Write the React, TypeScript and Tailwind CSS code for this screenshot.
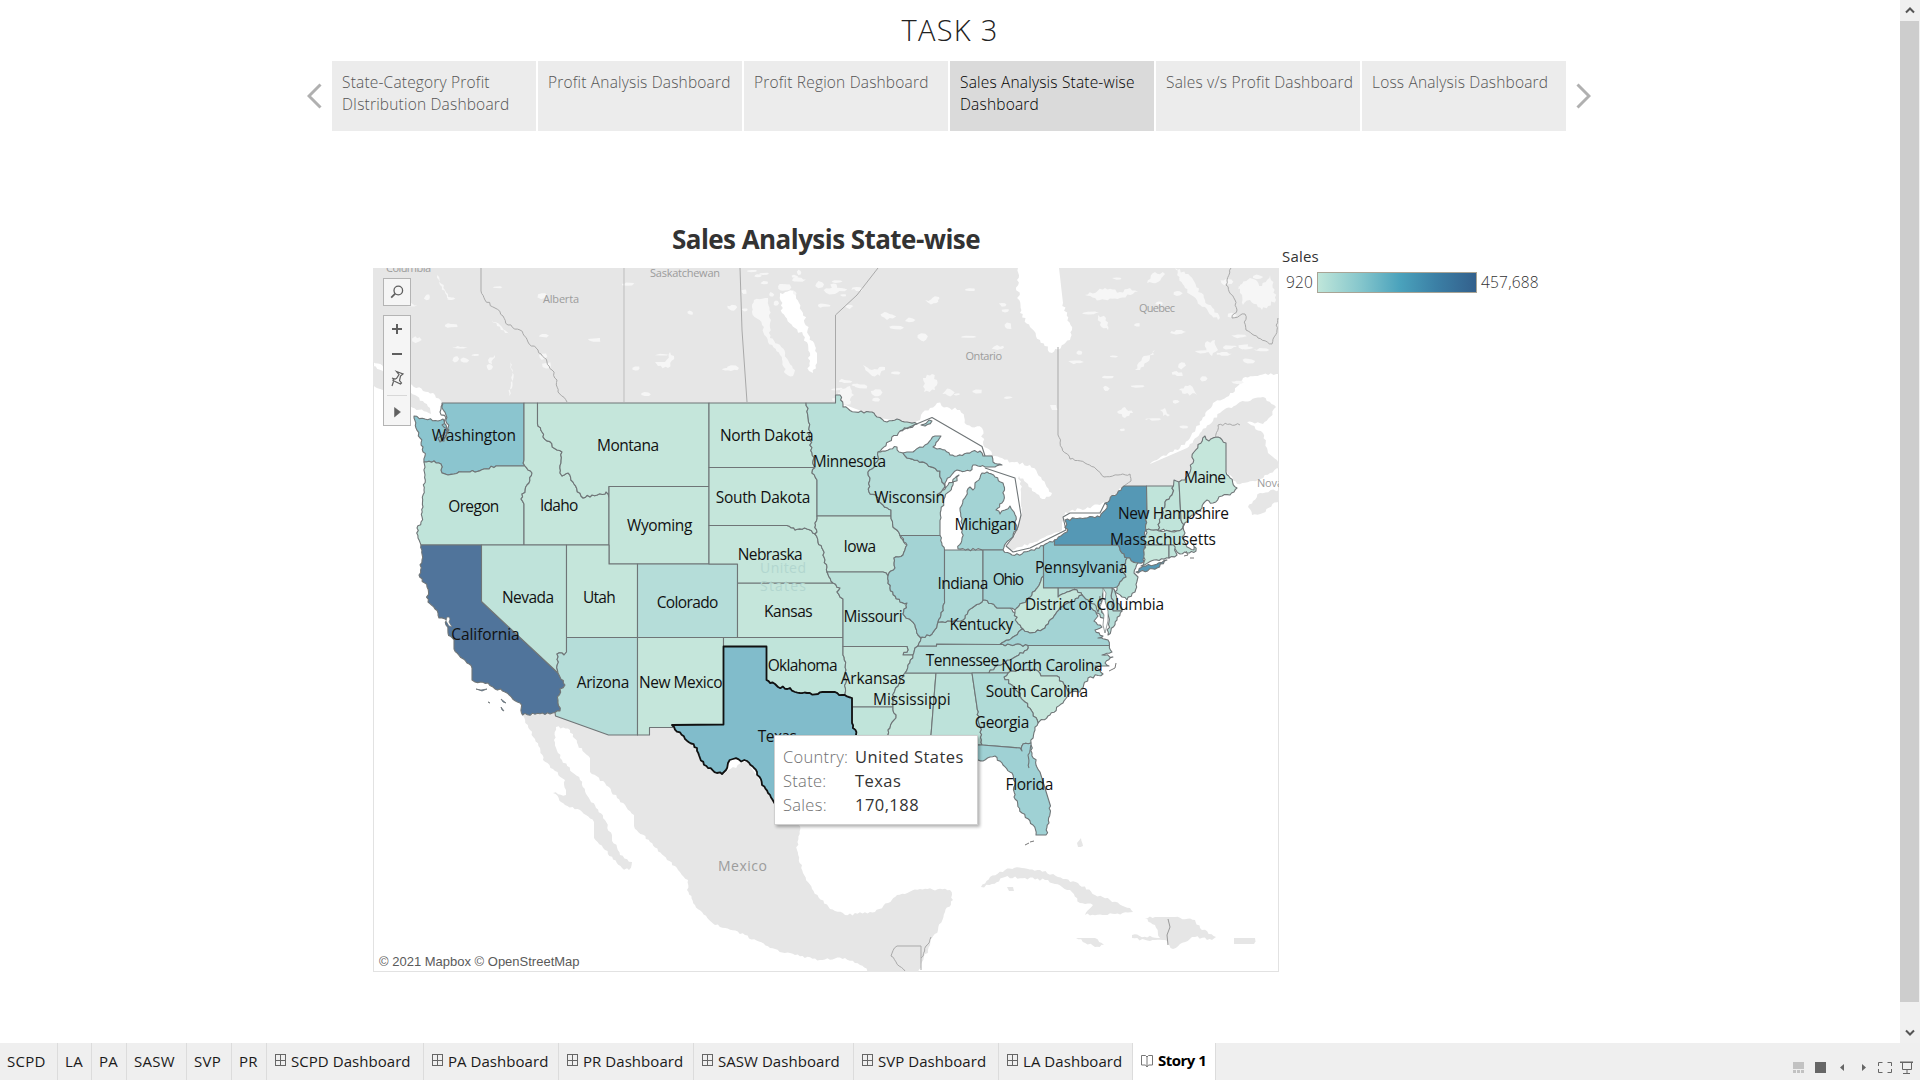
import React from "react";

const UI = "font-['Open_Sans','Noto_Sans',sans-serif]";

type Region = { fill: string; pts: string };

const L = "#c0e4da";
const L2 = "#c5e6db";
const M1 = "#b7ded9";
const M2 = "#a3d3d4";

const states: Region[] = [
  { fill: "#8bc5cf", pts: "442,403 524,403 524,460 525,466 496,466 484,469 470,472 462,472 454,474 448,475 442,473 441,464 434,461 424,462 425,456 423,447 420,438 416,428 414,418 414,416 425,419 438,421 443,419 446,425 447,432 441,441 444,441 448,428 446,415 442,408" },
  { fill: L, pts: "424,462 434,461 441,464 442,473 448,475 454,474 462,472 470,472 484,469 496,466 525,466 532,473 527,485 521,499 524,504 524,545 421,545 418,538 417,528 421,522 423,507 424,490 425,475" },
  { fill: L2, pts: "524,403 537.5,403 537.5,424 542,432 543,437 557,450 562,452 561,463 560,473 562,476 568,473 574,484 581,496 583,498 592,495 605,494 606,492 609,497 609,545 524,545 524,504 521,499 527,485 532,473 525,466 524,460" },
  { fill: L2, pts: "537.5,403 709,403 709,486.5 609,486.5 609,497 606,492 605,494 592,495 583,498 581,496 574,484 568,473 562,476 560,473 561,463 562,452 557,450 543,437 542,432 537.5,424" },
  { fill: L2, pts: "609,486.5 709,486.5 709,564 609,564" },
  { fill: "#50749b", pts: "421,545 481.5,545 481.5,601.5 558,673 560,677 565,685 560,689 558,700 560,711 555,712.5 522.5,715 520,703 505,692 493,687 488,683 475,682 472,680 472,668 467,663 454,649 454,640 448,633 446,625 447,620 439,618 438,613 428,602 427,587 419,575 422,560" },
  { fill: "#bfe3da", pts: "481.5,545 566.5,545 566.5,652 564,655 562,653 557,654 558,673 481.5,601.5" },
  { fill: L2, pts: "566.5,545 609,545 609,564 637.5,564 637.5,637.5 566.5,637.5" },
  { fill: "#b5ddd9", pts: "637.5,564 737.5,564 737.5,637.5 637.5,637.5" },
  { fill: "#b5ddd9", pts: "566.5,637.5 637.5,637.5 637.5,735 608.5,735 555.5,716 555,712.5 560,711 558,700 560,689 565,685 560,677 558,673 557,654 562,653 564,655 566.5,652" },
  { fill: L2, pts: "637.5,637.5 723.5,637.5 723.5,724.5 672,724.5 673,727.5 649.5,727.5 649.5,735 637.5,735" },
  { fill: L, pts: "723.5,637.5 843,637.5 843,655 846,670 845,696 842,695 835,692 827,692 818,694 807,693 795,692 790,688 778,687 770,683 766.5,680 766.5,646.5 723.5,646.5" },
  { fill: L2, pts: "737.5,583 833,583 840,588 837,592 840,597 843,599 843,637.5 737.5,637.5" },
  { fill: L2, pts: "709,525.5 787,525.5 795,530 807,529 815,534 818,542 823,550 825,560 827,572 833,583 737.5,583 737.5,564 709,564" },
  { fill: L2, pts: "709,467.5 815,467.5 812,473 817,480 817,516 815,523 817,532 815,534 807,529 795,530 787,525.5 709,525.5" },
  { fill: L2, pts: "709,403 806,403 808,417 810,437 812,453 815,467.5 709,467.5" },
  { fill: "#b8e0d9", pts: "806,403 835.5,403 835.5,395 840,395 843,407 855,412 861,411 864,413 872,412 877,417 887,422 897,419 907,422 917,424 900,431 878,452 877,462 868,472 870,478 869,492 877,497 883,505 891,510 891,516 817,516 817,480 812,473 815,467.5 812,453 810,437 808,417" },
  { fill: L2, pts: "817,516 891,516 893,527 900,535 907,545 903,555 894,558 895,568 888,576 883,572 827,572 825,560 823,550 818,542 815,534 817,532 815,523" },
  { fill: "#bbe1d9", pts: "827,572 883,572 888,576 890,588 900,602 907,603 903,614 915,625 918,635 921,638 918,646 915,648 913,655 903,655 908,650 907,646.5 843,646.5 843,599 840,597 837,592 840,588 833,583" },
  { fill: L2, pts: "843,646.5 907,646.5 908,650 903,655 913,655 908,665 905,673 900,682 895,690 893,700 893,707 852,707 852,698 845,696 846,670 843,655" },
  { fill: L, pts: "852,707 893,707 896,718 890,728 888,735 888,740 912,740 918,765 860,760 856,735 852,723" },
  { fill: L2, pts: "905,673 936,673 931,735 932,755 916,755 912,740 888,740 888,735 890,728 896,718 893,707 893,700 895,690 900,682" },
  { fill: "#bde2da", pts: "936,673 972,673 977,707 980,727 982,745 945,745 945,755 932,755 931,735" },
  { fill: "#b5ddd8", pts: "918,646 936.5,646 936.5,644 1000,644.5 1028,645.5 1027,650 1010,660 995,667 989,673 905,673 908,665 913,655 915,648" },
  { fill: "#b3dcd7", pts: "921,638 922,637 932,634 937,625 938,622 950,621 963,620 972,608 982,602 983,600 985,600 997,608 1010,608 1015,613 1017,622 1023,629 1013,637 1000,644.5 936.5,644 936.5,646 918,646" },
  { fill: M2, pts: "900,535.5 940,535.5 944.5,550 944.5,600 943,608 938,622 937,625 932,634 922,637 921,638 918,635 915,625 903,614 907,603 900,602 890,588 888,576 895,568 894,558 903,555 907,545 900,535.5" },
  { fill: "#add9d7", pts: "944.5,550 983,550 983,600 982,602 972,608 963,620 950,621 938,622 943,608 944.5,600" },
  { fill: M1, pts: "878,452 890,449 897,447 899,452 903,453 907,458 927,464 940,471 942,482 945,487 938,494 948,485 959,475 953,485 945,497 941,510 940,523 940,535.5 900,535.5 893,527 891,516 891,510 883,505 877,497 869,492 870,478 868,472 877,462" },
  { fill: M2, pts: "903,453 907,452 913,452 925,445 935,436 941,436 933,447 937,449 945,450 950,455 957,456 967,453 980,451 983,456 992,456 993,462 1002,465 995,467 985,467 978,466 973,465 970,471 957,470 950,477 945,483 945,487 942,482 940,471 927,464 907,458" },
  { fill: M2, pts: "980,478 975,483 973,490 970,487 963,500 960,508 963,527 962,538 958,549 983,550 1003,550 1006,543 1013,537 1017,527 1014,512 1010,506 1005,510 1000,514 996,510 1002,503 1004,495 1003,483 995,477 987,472 982,473" },
  { fill: M2, pts: "921,425 929,420 932,421 925,426" },
  { fill: M2, pts: "983,550 1003,550 1012,555 1022,554 1043.5,545.5 1043.5,573 1040,583 1032,595 1023,603 1015,610 1010,608 997,608 985,600 983,600" },
  { fill: "#91c9d0", pts: "1043.5,545.5 1054.5,540 1054.5,545 1118.5,545 1122,553 1127,558 1122,568 1126,577 1117,587 1113,588 1043.5,588" },
  { fill: "#5598b5", pts: "1054.5,540 1067,532 1065,520 1080,518 1100,517 1107,508 1105,503 1124,486 1146.5,486 1147,510 1146,530 1144,562 1138,563 1127,558 1122,553 1118.5,545 1054.5,545" },
  { fill: "#5598b5", pts: "1136,572 1143,566 1154,565 1167,560 1157,568 1138,573" },
  { fill: L, pts: "1146.5,486 1173.5,486 1172,495 1165,502 1158,530 1146,530 1147,510" },
  { fill: L, pts: "1173.5,486 1174,480 1179,482 1181,520 1183,527 1177,531 1158,530 1165,502 1172,495" },
  { fill: L2, pts: "1179,482 1185,480 1191,468 1194,452 1205,436 1209,441 1218,437 1226,443 1226,472 1230,478 1237,488 1230,495 1222,496 1213,503 1207,500 1200,510 1190,517 1183,527 1181,520" },
  { fill: L, pts: "1146,530 1177,531 1183,527 1185,533 1182,537 1187,547 1194,550 1193,544 1196,551 1187,553 1180,554 1173.5,545 1145,545" },
  { fill: L2, pts: "1145,545 1169,545 1169,558 1154,560 1141,566 1144,562" },
  { fill: L, pts: "1169,545 1173.5,545 1177,555 1169,558" },
  { fill: "#bbe1d9", pts: "1127,558 1138,563 1134,573 1138,577 1135,592 1127,600 1122,597 1115,592 1117,587 1126,577 1122,568" },
  { fill: M1, pts: "1112,588 1115,592 1117,600 1122,611 1113,611" },
  { fill: M1, pts: "1058,588 1112,588 1113,611 1122,611 1117,620 1108,635 1109,622 1107,612 1103,593 1100,607 1107,622 1093,610 1088,600 1082,595 1077,590 1067,592 1058,597" },
  { fill: L2, pts: "1043.5,573 1043.5,588 1058,588 1058,597 1067,592 1077,590 1082,595 1072,602 1060,608 1053,618 1045,628 1030,633 1023,629 1017,622 1015,613 1015,610 1023,603 1032,595 1040,583" },
  { fill: M2, pts: "1000,644.5 1013,637 1023,629 1030,633 1045,628 1053,618 1060,608 1072,602 1082,595 1088,600 1093,610 1098,616 1094,621 1102,627 1095,630 1103,636 1098,638 1108,640 1109.5,645.5 1028,645.5" },
  { fill: M1, pts: "1028,645.5 1109.5,645.5 1112,652 1102,655 1113,657 1105,663 1109,666 1095,666 1103,674 1088,678 1080,692 1070,693 1057,676 1041,676 1038,671 1020,669 1008,673 989,673 995,667 1010,660 1027,650" },
  { fill: L2, pts: "1008,673 1020,669 1038,671 1041,676 1057,676 1070,693 1068,695 1063,703 1050,715 1038,723 1033,713 1025,702 1015,688 1004,677" },
  { fill: "#b0dbd7", pts: "972,673 1008,673 1004,677 1015,688 1025,702 1033,713 1038,723 1035,730 1031,743 1023,744 1022,751 1020,748 982,745 980,727 977,707" },
  { fill: "#9fd1d4", pts: "945,745 982,745 1020,748 1022,751 1023,744 1031,743 1032,753 1040,772 1050.5,806 1049,823 1046,835 1036,835 1033,825 1022,813 1014,797 1015,785 1012,773 1003,765 995,756 990,757 983,761 970,755 945,755" },
];

const texas =
  "723.5,646.5 766.5,646.5 766.5,680 770,683 775,684 778,687 790,688 795,692 807,693 818,694 827,692 835,692 842,695 852,698 852,723 856,735 856,760 820,785 785,812 775,804 768,793 762,785 757,772 747,761 733,759 728,763 726,770 722,774 708,768 700,758 697,748 685,739 672,725 723.5,724.5";

/* Deterministic noise per edge: both neighbours of a shared border get the same wiggle. */
function noise(a: number, b: number, k: number) {
  const s = Math.sin(a * 12.9898 + b * 78.233 + k * 37.719) * 43758.5453;
  return (s - Math.floor(s)) * 2 - 1;
}

function rough(pts: string, amp = 1.3, closed = true, max = 34) {
  const p = pts.split(" ").map((s) => s.split(",").map(Number));
  const out: string[] = [];
  const n = closed ? p.length : p.length - 1;
  for (let i = 0; i < n; i++) {
    const a = p[i];
    const b = p[(i + 1) % p.length];
    out.push(a[0] + "," + a[1]);
    const dx = b[0] - a[0];
    const dy = b[1] - a[1];
    const len = Math.hypot(dx, dy);
    if (Math.abs(dx) < 0.6 || Math.abs(dy) < 0.6 || len < 4.5 || len > max) continue;
    const flip = a[0] > b[0];
    const [s, e] = flip ? [b, a] : [a, b];
    const steps = Math.max(2, Math.round(len / 2.6));
    const mids: string[] = [];
    for (let k = 1; k < steps; k++) {
      const t = k / steps;
      const o = noise(s[0] + e[0], s[1] + e[1], k) * amp;
      const x = s[0] + (e[0] - s[0]) * t - ((e[1] - s[1]) / len) * o;
      const y = s[1] + (e[1] - s[1]) * t + ((e[0] - s[0]) / len) * o;
      mids.push(x.toFixed(1) + "," + y.toFixed(1));
    }
    if (flip) mids.reverse();
    out.push(...mids);
  }
  if (!closed) out.push(p[p.length - 1].join(","));
  return out.join(" ");
}

const land = [
  "373,268 1279,268 1279,374 1260,375 1243,378 1233,393 1213,403 1202,420 1190,438 1180,448 1150,464 1187,448 1200,433 1220,413 1240,402 1263,397 1276,407 1270,417 1263,424 1247,422 1263,433 1268,453 1277,460 1279,468 1270,473 1258,480 1237,484 1225,470 1200,470 1180,486 1124,486 1104,505 1100,512 1066,516 1062,522 1062,530 1035,542 1012,550 1007,546 1017,530 1021,515 1020,492 1014,478 985,460 980,440 935,418 916,424 880,418 840,403 442,403 435,395 412,385 400,375 373,362",
  "373,366 395,380 415,395 430,408 431,414 405,405 385,392 373,385",
  "1248,507 1260,493 1279,490 1279,500 1263,513 1252,515",
  "522.5,715 555,712 608,735 649,727 672,725 697,748 722,774 747,761 775,804 800,826 797,850 803,873 812,889 830,909 845,915 875,912 888,903 897,895 920,889 950,890 953,900 945,912 938,930 930,940 928,950 922,962 918,972 870,972 860,965 845,958 820,960 795,955 770,948 745,935 715,925 695,905 687,890 688,880 678,870 664,856 650,842 634,826 634,815 617,798 605,783 590,772 590,758 578,745 570,730 556,727 554,740 562,760 580,780 590,800 605,820 612,838 620,855 632,862 629,870 622,868 605,850 594,838 594,822 580,810 565,805 553,793 566,795 565,780 543,760 540,748 530,730",
  "981,887 990,877 1005,870 1022,868 1040,870 1063,879 1078,883 1095,895 1110,900 1130,908 1133,912 1115,914 1085,915 1093,905 1080,903 1070,890 1045,880 1025,878 1005,877 992,884",
  "1145,918 1155,917 1175,917 1195,920 1200,928 1216,937 1212,940 1195,937 1180,944 1173,949 1165,940 1150,941 1132,938 1132,935 1160,938 1155,925",
  "1076,938 1095,938 1104,945 1095,947",
  "1234,938 1255,938 1254,944 1234,944",
  "1007,887 1013,887 1014,891 1009,891",
  "1077,843 1081,838 1083,846 1078,847",
];

const water = [
  "1018,268 1059,268 1063,303 1072,330 1070,340 1052,353 1040,340 1030,327 1020,313 1017,280",
  "916,424 921,415 930,408 937,403 947,407 960,410 967,425 982,428 983,442 992,455 980,452 935,436 900,440 880,452 895,432",
  "985,460 995,456 1012,462 1030,465 1042,480 1052,493 1045,499 1037,494 1028,484 1019,476 1021,492 1021,510 1017,520 1012,500 1000,480 985,470",
  "1062,516 1070,511 1100,505 1106,502 1105,508 1096,516 1067,521",
  "780,293 793,291 803,313 810,337 817,353 817,363 813,373 809,371 810,353 803,335 795,328 782,313",
];

const lakes = [
  "754,300 768,298 771,320 770,338 780,345 788,360 795,370 793,376 786,374 780,355 768,342 762,325 752,312",
  "923,378 932,374 937,380 935,390 924,392",
  "840,390 850,386 854,395 848,402 842,400",
  "1085,295 1105,288 1120,292 1130,288 1138,292 1120,298 1100,300",
  "1147,283 1155,272 1165,274 1158,282",
  "1175,268 1190,276 1205,300 1220,318 1218,320 1200,305 1185,288",
  "1135,370 1142,358 1155,350 1150,358 1140,370",
  "1117,412 1125,407 1133,413 1125,418",
  "1205,343 1215,340 1218,350 1212,356 1206,352",
  "1179,390 1190,385 1197,395 1185,394",
  "1160,410 1165,408 1170,415 1163,416",
  "1240,285 1250,278 1262,286 1270,275 1276,300 1262,310 1250,300 1243,305",
  "1040,316 1052,312 1060,320 1048,322",
  "1005,466 1010,470 1020,470 1014,475",
  "863,365 872,370 885,367 880,376 870,374",
  "1098,315 1106,318 1108,330 1100,325",
  "1050,405 1056,405 1058,410 1052,410",
  "437,275 445,290 452,300 447,298 440,285",
  "655,362 665,362 670,352 674,356 668,368 658,366",
  "490,318 500,325 510,335 505,333",
  "510,360 513,380 509,396 512,380",
  "488,360 495,355 492,364",
];

const provinces = [
  "481,268 481,291 485,300 495,308 503,316 508,325 520,330 528,342 538,350 547,362 552,370 557,380 558,392 567,402",
  "740,268 742,330 747,402",
  "1058,347 1058,435 1062,448 1070,459 1085,463 1096,469 1104,477 1118,475 1130,474 1131,481 1124,486",
  "1231,268 1226,285 1235,300 1237,310 1232,318 1245,314 1246,330 1258,338 1272,344 1277,330 1278,318",
  "1209,441 1216,438 1218,425 1230,424 1240,425",
  "905,971 891,956 897,946 921,946 921,970",
  "921,958 926,946 931,937",
];

/* Scattered small lakes: x range, y range and how many to place. */
const fields = [
  [740, 850, 270, 310, 26],
  [850, 1015, 275, 400, 20],
  [1085, 1270, 272, 390, 26],
  [1070, 1190, 350, 440, 10],
  [380, 560, 275, 390, 16],
  [580, 740, 280, 395, 9],
  [835, 880, 380, 402, 7],
];

const ponds = fields.flatMap(([x1, x2, y1, y2, n], f) =>
  Array.from({ length: n }, (_, i) => {
    const x = x1 + ((noise(f, i, 1) + 1) / 2) * (x2 - x1);
    const y = y1 + ((noise(f, i, 2) + 1) / 2) * (y2 - y1);
    const w = 3 + Math.abs(noise(f, i, 3)) * 6;
    const h = 1 + Math.abs(noise(f, i, 4)) * 3;
    const pts = [0, 1, 2, 3, 4, 5, 6].map((k) => {
      const a = (k / 7) * Math.PI * 2;
      const r = 0.6 + 0.5 * Math.abs(noise(i, f, k + 5));
      return (x + Math.cos(a) * w * r).toFixed(1) + "," + (y + Math.sin(a) * h * r).toFixed(1);
    });
    return pts.join(" ");
  }),
);

type Label = [string, number, number, number];

const labels: Label[] = [
  ["Washington", 431.7, 516, 440.5],
  ["Montana", 597, 659, 451],
  ["Oregon", 448.3, 499.3, 512],
  ["Idaho", 540, 578.3, 510.5],
  ["Wyoming", 627, 692.3, 531],
  ["North Dakota", 720, 813.7, 440.5],
  ["South Dakota", 715.7, 810.3, 502.5],
  ["Minnesota", 812.8, 886, 466.5],
  ["Wisconsin", 874.3, 945, 502.5],
  ["Michigan", 954.5, 1016.7, 529.5],
  ["Iowa", 843.5, 876, 551.5],
  ["Nebraska", 737.7, 802.7, 560],
  ["Maine", 1184, 1226, 482.5],
  ["New Hampshire", 1118, 1229, 518.5],
  ["Massachusetts", 1110, 1216, 544.5],
  ["Nevada", 502, 554, 602.5],
  ["Utah", 583, 615.7, 602.5],
  ["California", 451.3, 519.7, 639.5],
  ["Arizona", 576.7, 629.3, 687.5],
  ["New Mexico", 639, 722.5, 687.5],
  ["Colorado", 656.7, 718.3, 607.5],
  ["Kansas", 764, 812.7, 616.5],
  ["Missouri", 843.5, 902.7, 621.5],
  ["Indiana", 937.5, 988.3, 588.5],
  ["Ohio", 992.7, 1024, 584.5],
  ["Pennsylvania", 1035, 1127.3, 572.5],
  ["District of Columbia", 1025, 1164, 609.5],
  ["Kentucky", 949.5, 1013.3, 629.5],
  ["Tennessee", 925.7, 999.3, 665.5],
  ["North Carolina", 1001.3, 1102.7, 670.5],
  ["South Carolina", 985.7, 1088, 696.5],
  ["Georgia", 974.7, 1029.3, 727.5],
  ["Florida", 1005.5, 1053.3, 789.5],
  ["Arkansas", 840.7, 905.3, 683.5],
  ["Mississippi", 873, 950.7, 704.5],
  ["Oklahoma", 767.7, 837.7, 670.5],
  ["Texas", 757.7, 797, 741.5],
];

const baseLabels: Label[] = [
  ["Columbia", 386, 431, 271.5],
  ["Alberta", 543, 579, 303],
  ["Saskatchewan", 650, 720, 277],
  ["Ontario", 965.5, 1002, 360],
  ["Quebec", 1139, 1175, 312],
  ["Nova", 1257, 1283, 487],
];

function UsMap() {
  return (
    <svg viewBox="373 268 906 704" width="906" height="704" className="absolute -left-px -top-px max-w-none">
      {land.map((p) => (
        <polygon key={p} points={rough(p)} fill="#e6e6e6" />
      ))}
      {[...lakes, ...ponds].map((p) => (
        <polygon key={p} points={rough(p, 1.6)} fill="#f6f6f6" />
      ))}
      {water.map((p) => (
        <polygon key={p} points={rough(p, 1.8)} fill="#ffffff" />
      ))}
      {provinces.map((p) => (
        <polyline key={p} points={rough(p, 1.2, false)} fill="none" stroke="#a9a9a9" strokeWidth={1} />
      ))}
      <line x1="624" y1="268" x2="624" y2="402" stroke="#bdbdbd" />
      <polyline points="878,268 857,295 835.5,315 835.5,395" fill="none" stroke="#a9a9a9" />
      <g className="font-['Open_Sans',sans-serif]" fill="#9c9c9c" fontSize={11}>
        {baseLabels.map(([t, x1, x2, y]) => (
          <text key={t} x={x1} y={y} textLength={x2 - x1}>
            {t}
          </text>
        ))}
        <text x="718" y="871" fontSize={14} textLength={49}>
          Mexico
        </text>
      </g>
      <g stroke="#6f7577" strokeWidth={1.1} strokeLinejoin="round">
        {states.map((s) => (
          <polygon key={s.pts} points={rough(s.pts)} fill={s.fill} />
        ))}
        <polyline points="900,431 932,417.5 982,446.5 985,456" fill="none" />
        <polyline points="985,468 1015,478 1021,515 1018,527 1013,537 1006,546 1013,552 1030,548 1066,530 1063,517 1070,513 1100,513 1105,503" fill="none" />
        <polyline points={rough("443,404 440,412 446,418 442,425 449,430 445,438 440,442 438,438 444,432", 1.6, false)} fill="none" />
        <polyline points={rough("1031,745 1028,755 1029,768", 1, false)} fill="none" />
        <polyline points={rough("1090,602 1096,606 1098,612 1102,604 1100,596", 1.4, false)} fill="none" />
      </g>
      <g fill="#ffffff" stroke="#6f7577" strokeWidth={0.7}>
        <path d="M447 617l2 0 1 2-1 3 3 5-3-1-3-5z" />
        <path d="M1103 588l3 5-1 8 3 10 0 10-3 12-2-8 1-10-4-8 3-8z" />
      </g>
      <g fill="#b2d6cf" className="font-['Open_Sans',sans-serif]" fontSize={14}>
        <text x="760" y="573" textLength={46}>United</text>
        <text x="760" y="591" textLength={46}>States</text>
      </g>
      <g fill="#50749b" stroke="#6f7577" strokeWidth={0.8}>
        <path d="M476 689l5 1 6-1-5 2zM501 699l5 4-3-1zM501 707l3 4-2-1zM488 702l2 1z" />
      </g>
      <path d="M1025 845l4-2M1030 842l4-1M1109 671l6-3 1-5M1184 556l4-1-2-4M1190 558h4" stroke="#777777" fill="none" />
      <path d="M1168 919l2 8-3 8 1 10" stroke="#999999" fill="none" />
      <polygon points={rough(texas)} fill="#81bccb" stroke="#111111" strokeWidth={1.8} strokeLinejoin="round" />
      <g className="font-['Open_Sans',sans-serif]" fill="#111111" fontSize={15.5}>
        {labels.map(([t, x1, x2, y]) => (
          <text key={t} x={x1} y={y} textLength={x2 - x1}>
            {t}
          </text>
        ))}
      </g>
    </svg>
  );
}

const storyPoints = [
  "State-Category Profit DIstribution Dashboard",
  "Profit Analysis Dashboard",
  "Profit Region Dashboard",
  "Sales Analysis State-wise Dashboard",
  "Sales v/s Profit Dashboard",
  "Loss Analysis Dashboard",
];

function Chevron({ flip = false }: { flip?: boolean }) {
  return (
    <svg width="15" height="26" viewBox="0 0 15 26" className={flip ? "mb-px ml-[10px] rotate-180" : "mb-px mr-[10px]"}>
      <path d="M13.5 1.5L2 13l11.500 11.500" fill="none" stroke="#b0b0b0" strokeWidth="3" />
    </svg>
  );
}

function MapTools() {
  return (
    <div className="absolute left-[9px] top-[9px]">
      <div className="flex h-7 w-7 items-center justify-center border border-[#b4b4b4] bg-[#f5f5f5]">
        <svg width="14" height="14" viewBox="0 0 14 14" fill="none" stroke="#5f5f5f" strokeWidth="1.3">
          <circle cx="8.300" cy="5.500" r="4.300" />
          <path d="M5.200 8.600L1.200 12.600" strokeWidth="1.800" />
        </svg>
      </div>
      <div className="mt-[9px] flex h-[111px] w-7 flex-col items-center border border-[#b4b4b4] bg-[#f5f5f5]">
        <svg width="26" height="109" viewBox="0 0 26 109" fill="none" stroke="#5f5f5f">
          <path d="M8 13h10M13 8v10M8 38h10" strokeWidth="2" />
          <path d="M12.500 55.500l6.500 2.500-2.500 2-1 4.500 2 2.500-1 1-7.500-3.500.5-1.500 3-.5 2.500-4zM9.500 65.500l-1.500 4.500M11.500 63.500L8 62" strokeWidth="1.200" />
          <path d="M3 79.500h20" stroke="#d8d8d8" />
          <path d="M10.500 91.500l6 4.500-6 5z" fill="#5f5f5f" strokeWidth="0.500" />
        </svg>
      </div>
    </div>
  );
}

const tip: [string, string][] = [
  ["Country:", "United States"],
  ["State:", "Texas"],
  ["Sales:", "170,188"],
];

function Tooltip() {
  return (
    <div className="absolute left-[400px] top-[466px] grid h-[90px] w-[204px] grid-cols-[72px_1fr] content-start border border-[#cfcfcf] bg-white pl-2 pt-[9px] text-[16.500px] leading-6 shadow-[2px_2px_3px_rgba(0,0,0,0.3)]">
      {tip.map(([k, v]) => (
        <React.Fragment key={k}>
          <span className="font-light tracking-[0.3px] text-[#707070]">{k}</span>
          <span className="whitespace-nowrap tracking-[0.45px] text-[#333333]">{v}</span>
        </React.Fragment>
      ))}
    </div>
  );
}

type Tab = { name: string; w: string; kind?: "dash" | "story" };

const sheetTabs: Tab[] = [
  { name: "SCPD", w: "w-[58px]" },
  { name: "LA", w: "w-[34px]" },
  { name: "PA", w: "w-[35px]" },
  { name: "SASW", w: "w-[60px]" },
  { name: "SVP", w: "w-[45px]" },
  { name: "PR", w: "w-[35px]" },
  { name: "SCPD Dashboard", w: "w-[157px]", kind: "dash" },
  { name: "PA Dashboard", w: "w-[135px]", kind: "dash" },
  { name: "PR Dashboard", w: "w-[135px]", kind: "dash" },
  { name: "SASW Dashboard", w: "w-[160px]", kind: "dash" },
  { name: "SVP Dashboard", w: "w-[145px]", kind: "dash" },
  { name: "LA Dashboard", w: "w-[134px]", kind: "dash" },
  { name: "Story 1", w: "w-[83px]", kind: "story" },
];

function SheetTab({ name, w, kind }: Tab) {
  const active = kind === "story";
  return (
    <div
      className={
        "flex h-full shrink-0 items-center whitespace-nowrap border-r border-[#dcdcdc] text-[15px] " +
        w +
        (active
          ? " bg-white pb-[2px] pl-[8px] font-bold tracking-[-0.5px] text-black"
          : kind === "dash"
            ? " pb-px pl-[8px] tracking-[0.05px] text-[#1a1a1a]"
            : " pb-px pl-[7px] tracking-[0.3px] text-[#1a1a1a]")
      }
    >
      {kind === "dash" && (
        <svg width="11" height="12" viewBox="0 0 11 12" className="mb-[2px] mr-[5px] shrink-0" fill="none" stroke="#666666">
          <rect x="0.500" y="0.500" width="10" height="11" />
          <path d="M5.500 0.500v11M0.500 6.500h10" />
        </svg>
      )}
      {active && (
        <svg width="12" height="14" viewBox="0 0 12 14" className="mr-[5px] shrink-0" fill="none" stroke="#777777">
          <path d="M6 3L4.500 1.500H0.500V11H4.500L6 13L7.500 11H11.500V1.500H7.500zM6 3v10" />
        </svg>
      )}
      {name}
    </div>
  );
}

export default function App() {
  return (
    <div className={"flex h-[1080px] w-[1920px] flex-col overflow-hidden bg-white " + UI}>
      <div className="flex h-[1043px]">
        <main className="w-[1900px]">
          <h1 className="h-[61px] pt-[9px] text-center text-[29px] font-light leading-[42px] tracking-[1.300px] text-[#222222]">TASK 3</h1>
          <nav className="flex h-[70px] items-center pl-[307px]">
            <Chevron />
            <div className="flex h-full gap-[2px]">
              {storyPoints.map((s, i) => (
                <div
                  key={s}
                  className={
                    "w-[204px] pl-[10px] pr-[4px] pt-[10px] text-[15.500px] font-light leading-[22px] tracking-[0.18px] " +
                    (i === 3 ? "bg-[#dadada] text-black" : "bg-[#ececec] text-[#555555]")
                  }
                >
                  {s}
                </div>
              ))}
            </div>
            <Chevron flip />
          </nav>
          <section className="flex pl-[373px] pt-[88px]">
            <div className="w-[906px]">
              <h2 className="h-[49px] text-center text-[26px] font-bold leading-[40px] tracking-[-0.55px] text-[#333333]">Sales Analysis State-wise</h2>
              <div className="relative h-[704px] border border-[#e2e2e2]">
                <UsMap />
                <MapTools />
                <Tooltip />
                <div className="absolute bottom-0 left-[2px] bg-white/70 px-[3px] font-['Liberation_Sans',sans-serif] text-[13px] leading-[19px] text-[#5a5a5a]">
                  © 2021 Mapbox © OpenStreetMap
                </div>
              </div>
            </div>
            <aside className="pl-[3px] pt-[26px] text-[#333333]">
              <div className="text-[15px] leading-[22px] tracking-[0.2px]">Sales</div>
              <div className="mt-[4px] flex items-center text-[15.500px] font-light leading-[22px] tracking-[0.2px]">
                <span className="w-[35px] pl-1">920</span>
                <div className="h-[21px] w-[160px] border border-[#a9a495] bg-[linear-gradient(90deg,#bfe6da_0%,#85c6cc_27%,#4aa2bc_52%,#3b7fa5_75%,#33608c_100%)]" />
                <span className="pl-1">457,688</span>
              </div>
            </aside>
          </section>
        </main>
        <div className="flex w-5 flex-col items-center justify-between bg-[#f0f0f0] py-[6px]">
          <svg width="10" height="8" viewBox="0 0 10 8" fill="none" stroke="#555555" strokeWidth="2">
            <path d="M1 6.500L5 2.500l4 4" />
          </svg>
          <div className="mb-[27px] mt-[7px] w-full flex-1 border-r border-[#f0f0f0] bg-[#cdcdcd]" />
          <svg width="10" height="8" viewBox="0 0 10 8" fill="none" stroke="#555555" strokeWidth="2">
            <path d="M1 1.500l4 4 4-4" />
          </svg>
        </div>
      </div>
      <footer className="flex h-[37px] bg-[#efefef]">
        {sheetTabs.map((t) => (
          <SheetTab key={t.name} {...t} />
        ))}
        <div className="ml-auto flex items-end pb-[6px] pr-[6px]">
          <svg width="122" height="14" viewBox="1792 1060 122 14" fill="#666666">
            <path d="M1793 1062h11v7h-11zM1793 1070h3v3h-3zM1797 1070h3v3h-3zM1801 1070h3v3h-3z" fill="#c2c2c2" />
            <path d="M1815 1062h11v11h-11zM1844 1064v7l-4-3.500zM1862 1064v7l4-3.500z" />
            <path d="M1878.500 1066v-3.500h4M1887.500 1062.500h4v3.500M1891.500 1069v3.500h-4M1882.500 1072.500h-4v-3.500M1902.500 1063v6.500h9V1063M1907 1070v3M1903 1073.500h7" fill="none" stroke="#666666" />
            <path d="M1900 1061.500h13v1.500h-13z" />
          </svg>
        </div>
      </footer>
    </div>
  );
}
